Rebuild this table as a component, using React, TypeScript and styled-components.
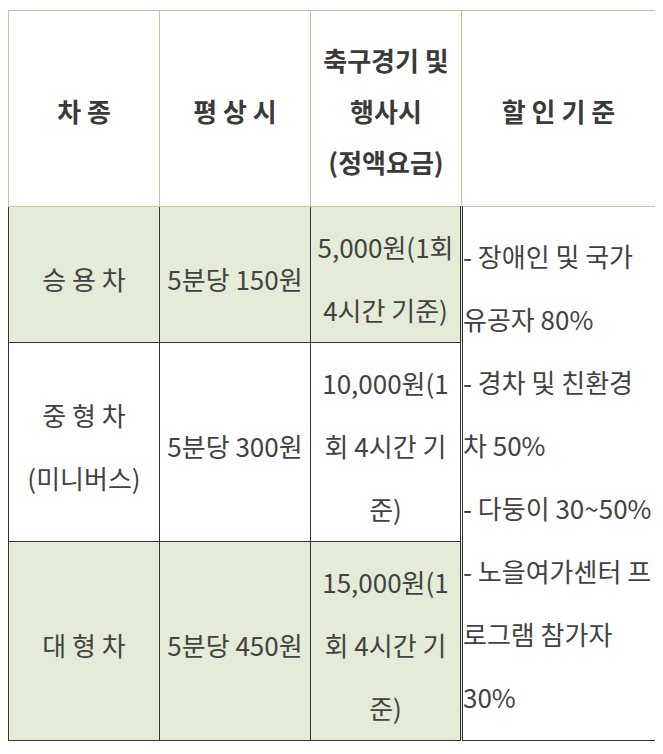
import {Fragment} from 'react';
import styled, {createGlobalStyle} from 'styled-components';

interface FeeRow {
  kind: string[];
  normal: string;
  event: string[];
  shaded: boolean;
}

const rows: FeeRow[] = [
  {kind: ['승 용 차'], normal: '5분당 150원', event: ['5,000원(1회', '4시간 기준)'], shaded: true},
  {
    kind: ['중 형 차', '(미니버스)'],
    normal: '5분당 300원',
    event: ['10,000원(1', '회 4시간 기', '준)'],
    shaded: false,
  },
  {kind: ['대 형 차'], normal: '5분당 450원', event: ['15,000원(1', '회 4시간 기', '준)'], shaded: true},
];

const discountLines = [
  '- 장애인 및 국가',
  '유공자 80%',
  '- 경차 및 친환경',
  '차 50%',
  '- 다둥이 30~50%',
  '- 노을여가센터 프',
  '로그램 참가자',
  '30%',
];

function Lines({items}: {items: string[]}) {
  return (
    <>
      {items.map((line, i) => (
        <Fragment key={line}>
          {i > 0 && <br />}
          {line}
        </Fragment>
      ))}
    </>
  );
}

function App() {
  return (
    <>
      <GlobalStyle />
      <FeeTable>
        <colgroup>
          <col width={151} />
          <col width={151} />
          <col width={151} />
          <col width={194} />
        </colgroup>
        <thead>
          <tr>
            <HeadCell>차 종</HeadCell>
            <HeadCell>평 상 시</HeadCell>
            <HeadCell>
              <Lines items={['축구경기 및', '행사시', '(정액요금)']} />
            </HeadCell>
            <HeadCell>할 인 기 준</HeadCell>
          </tr>
        </thead>
        <tbody>
          {rows.map((row, i) => (
            <tr key={row.normal}>
              <BodyCell $shaded={row.shaded}>
                <Lines items={row.kind} />
              </BodyCell>
              <BodyCell $shaded={row.shaded}>{row.normal}</BodyCell>
              <BodyCell $shaded={row.shaded}>
                <Lines items={row.event} />
              </BodyCell>
              {i === 0 && (
                <NoteCell rowSpan={rows.length}>
                  <Lines items={discountLines} />
                </NoteCell>
              )}
            </tr>
          ))}
        </tbody>
      </FeeTable>
    </>
  );
}

const GlobalStyle = createGlobalStyle`
  body {
    margin: 8px;
    background: #fff;
    font-family: 'Noto Sans CJK KR', 'Noto Sans', sans-serif;
    color: #424242;
  }
`;

const FeeTable = styled.table`
  margin-top: 2px;
  width: 647px;
  table-layout: fixed;
  border-collapse: collapse;
  font-size: 26px;
`;

const HeadCell = styled.th`
  height: 191px;
  padding: 4px 2px 0;
  border: 1px solid #bccb9c;
  font-weight: 700;
  line-height: 51px;
  color: #3a3a3a;
  vertical-align: middle;
`;

const BodyCell = styled.td<{$shaded?: boolean}>`
  padding: 8px 2px 1px;
  border: 1px solid #333;
  background: ${p => (p.$shaded ? '#e4ebd6' : '#fff')};
  line-height: 63px;
  text-align: center;
  white-space: nowrap;
`;

const NoteCell = styled.td`
  padding: 17px 0 0;
  border: 1px solid #333;
  border-left: 3px double #333;
  line-height: 63px;
  vertical-align: top;
  white-space: nowrap;
`;

export default App;
